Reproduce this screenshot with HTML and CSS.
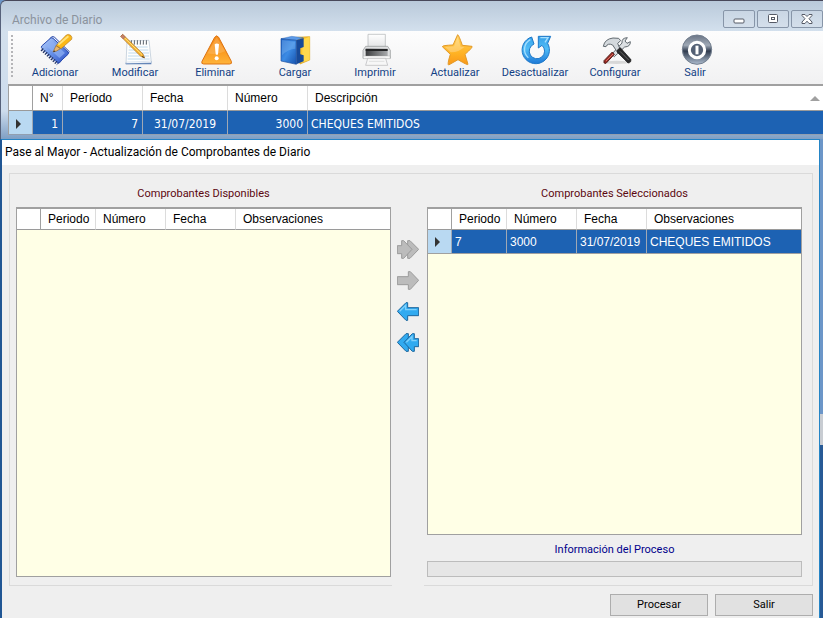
FILE: index.html
```html
<!DOCTYPE html>
<html lang="es">
<head>
<meta charset="utf-8">
<title>Archivo de Diario</title>
<link rel="stylesheet" href="styles.css">
</head>
<body>
<section class="window">
  <header class="titlebar">
    <h1 class="titlebar-text">Archivo de Diario</h1>
    <div class="window-buttons">
      <button class="window-button" aria-label="Minimizar"><svg width="12" height="12" viewBox="0 0 12 12"><rect x="1" y="6" width="10" height="4" rx="1" fill="#fff" stroke="#555a66"/></svg></button>
      <button class="window-button" aria-label="Restaurar"><svg width="12" height="12" viewBox="0 0 12 12"><rect x="1.5" y="1.5" width="9" height="8" rx="1" fill="#fff" stroke="#555a66"/><rect x="4.500" y="4.500" width="3" height="2" fill="#fff" stroke="#555a66"/></svg></button>
      <button class="window-button" aria-label="Cerrar"><svg width="12" height="12" viewBox="0 0 12 12"><path d="M1 1.500h3l2 2 2-2h3v1L8 5.700l3 3.300v1.500H8l-2-2.300-2 2.300H1V9l3-3.300-3-3.200z" fill="#fff" stroke="#555a66"/></svg></button>
    </div>
  </header>

  <div class="window-body">
    <nav class="toolbar">
      <span class="grip"></span>
      <button class="tool">
        <svg class="tool-icon" viewBox="0 0 96 96">
          <defs><linearGradient id="note" x1="0" y1="0" x2="1" y2="1"><stop offset="0" stop-color="#b9d2fa"/><stop offset=".5" stop-color="#6791e8"/><stop offset="1" stop-color="#2b4ec4"/></linearGradient></defs>
          <path d="M12 44 37 9q5-3 10 1L91 53 60 88z" fill="#e8effc" stroke="#2746a8" stroke-width="3"/>
          <path d="M8 36 34 13q4-3 8 0L87 54q3 3 0 7L60 86q-4 3-8-1L9 46q-3-5-1-10z" fill="url(#note)" stroke="#2b4bb0" stroke-width="3"/>
          <path d="M20 34 37 19 78 57 61 72z" fill="#8eb1f4" opacity=".7"/>
          <path d="M8 46 56 90" stroke="#20305f" stroke-width="10" stroke-dasharray="4 4"/>
          <path d="M6 43 54 87" stroke="#dfe8fb" stroke-width="3" stroke-dasharray="4 4"/>
          <path d="M51 35 82 3q6-4 13 1 6 7 3 12L66 44z" fill="#fbb817" stroke="#b87915" stroke-width="2"/>
          <path d="M58 32 88 7" stroke="#ffe27a" stroke-width="6"/>
          <path d="M51 35 64 44 53 51 42 54z" fill="#e9b76c" stroke="#8e6531" stroke-width="2"/><path d="M42 54l7-1-3-4z" fill="#333"/>
        </svg>
        <span>Adicionar</span>
      </button>
      <button class="tool">
        <svg class="tool-icon" viewBox="0 0 96 96">
          <path d="M24 21 90 19 97 86 21 90z" fill="#fdfefe" stroke="#b4c3d1" stroke-width="2"/>
          <path d="M20 86 97 82v9H20z" fill="#5c7fb4"/>
          <path d="M23 84 96 81 97 86 21 88z" fill="#fff" stroke="#a9bfd7" stroke-width="1"/>
          <path d="M30 39h56M29 48h59M28 57h62M27 66h63M26 75h66" stroke="#a5c9e5" stroke-width="2"/>
          <path d="M37 30V20m9 10V20m9 10V20m9 10V20m9 10V20m9 10V20" stroke="#70777f" stroke-width="4" stroke-linecap="round"/>
          <path d="M34 30V19m9 10V19m9 10V19m9 10V19m9 10V19m9 10V19" stroke="#fff" stroke-width="2"/>
          <path d="M5 7 11 1 72 60 77 72 65 67z" fill="#f6b22b" stroke="#a76e28" stroke-width="2"/>
          <path d="M13 8 69 62" stroke="#ffe183" stroke-width="3"/>
          <path d="M5 7 11 1 19 9 13 15z" fill="#c5806a" stroke="#86503d" stroke-width="1"/><path d="M71 66 77 72 69 69z" fill="#222"/>
        </svg>
        <span>Modificar</span>
      </button>
      <button class="tool">
        <svg class="tool-icon" viewBox="0 0 96 96">
          <defs><linearGradient id="warn" x1="0" y1="0" x2="0" y2="1"><stop offset="0" stop-color="#f58a16"/><stop offset=".55" stop-color="#fa9a20"/><stop offset="1" stop-color="#ffb43a"/></linearGradient></defs>
          <path d="M47 10q6-9 12 0L97 82q3 8-5 8H14q-8 0-5-8z" fill="url(#warn)" stroke="#dd7415" stroke-width="3"/>
          <path d="M53 10 25 58Q53 64 79 52z" fill="#fff" opacity=".16"/>
          <path d="M47 31q6-5 13 0L57 61q-3 3-7 0z" fill="#fff"/><circle cx="53" cy="73" r="6" fill="#fff"/>
        </svg>
        <span>Eliminar</span>
      </button>
      <button class="tool">
        <svg class="tool-icon" viewBox="0 0 96 96">
          <defs><linearGradient id="box" x1="0" y1="0" x2="1" y2="1"><stop offset="0" stop-color="#1e62c4"/><stop offset=".5" stop-color="#3c8be4"/><stop offset="1" stop-color="#1752ad"/></linearGradient></defs>
          <path d="M52 10 92 8V78L63 90z" fill="#ffc62b" stroke="#d89b13" stroke-width="2"/>
          <path d="M70 17 92 8V78L70 85z" fill="#ffd84e"/>
          <path d="M6 14 38 7 73 11 52 19z" fill="#5b9ae8" stroke="#2459a5" stroke-width="1"/>
          <path d="M6 14 52 19V91L6 81z" fill="url(#box)" stroke="#1c4e9d" stroke-width="2"/>
          <path d="M52 19 74 12V39L64 43V61L74 64V82L52 91z" fill="#174a99"/>
          <path d="M9 18 49 23V44Q28 44 9 64z" fill="#90c2f6" opacity=".35"/>
        </svg>
        <span>Cargar</span>
      </button>
      <button class="tool">
        <svg class="tool-icon" viewBox="0 0 96 96">
          <defs><linearGradient id="prn" x1="0" y1="0" x2="1" y2="0"><stop offset="0" stop-color="#3c3d3f"/><stop offset="1" stop-color="#a9abad"/></linearGradient><linearGradient id="paper" x1="0" y1="0" x2="0" y2="1"><stop offset="0" stop-color="#fff"/><stop offset="1" stop-color="#e1e2e3"/></linearGradient></defs>
          <path d="M27 1h52v42H27z" fill="url(#paper)" stroke="#aeb0b2" stroke-width="2"/>
          <path d="M20 37h66l8 12v24H12V49z" fill="#dfe0e1" stroke="#8d8f91" stroke-width="2"/>
          <path d="M20 44h66v24H20z" fill="url(#prn)"/><path d="M20 48h66" stroke="#232426" stroke-width="6"/>
          <path d="M13 66h80v8H13z" fill="#f7f7f7" stroke="#a5a6a8" stroke-width="1"/>
          <path d="M26 73h54l6 21H20z" fill="#f7f7f7" stroke="#b3b4b6" stroke-width="2"/><path d="M30 82h46" stroke="#d3d4d5" stroke-width="2"/>
        </svg>
        <span>Imprimir</span>
      </button>
      <button class="tool">
        <svg class="tool-icon" viewBox="0 0 96 96">
          <defs><linearGradient id="star" x1="0" y1="0" x2="0" y2="1"><stop offset="0" stop-color="#ffd261"/><stop offset=".6" stop-color="#ffb324"/><stop offset="1" stop-color="#f99719"/></linearGradient></defs>
          <path d="M56 2Q59 2 70 34L99 37Q103 39 78 61L87 91Q87 95 57 77L29 93Q24 93 34 61L10 38Q10 34 42 33Z" fill="url(#star)" stroke="#e39a28" stroke-width="3" stroke-linejoin="round"/>
          <path d="M56 9 45 37 18 39 35 55Q58 56 76 39L65 38z" fill="#fff" opacity=".25"/>
        </svg>
        <span>Actualizar</span>
      </button>
      <button class="tool">
        <svg class="tool-icon" viewBox="0 0 96 96">
          <defs><linearGradient id="undo" x1="0" y1="0" x2="0" y2="1"><stop offset="0" stop-color="#359fe8"/><stop offset=".45" stop-color="#50bdf7"/><stop offset="1" stop-color="#1d78d6"/></linearGradient></defs>
          <path d="M38 9A41 41 0 1 0 86 28L95 7H58V42L69 34A23 23 0 1 1 45 30Z" fill="url(#undo)" stroke="#1e78c8" stroke-width="3" stroke-linejoin="round"/>
          <path d="M34 17A33 33 0 0 0 28 71M64 11H87L78 25" fill="none" stroke="#a4defe" stroke-width="4"/>
        </svg>
        <span>Desactualizar</span>
      </button>
      <button class="tool">
        <svg class="tool-icon" viewBox="0 0 96 96">
          <ellipse cx="53" cy="85" rx="41" ry="5" fill="#d8d8d8"/>
          <path d="M69 27Q67 12 85 11L78 21 84 28 94 23Q95 38 77 39L46 68 38 61z" fill="#dce0e3" stroke="#626a70" stroke-width="3"/>
          <path d="M46 61 21 88Q13 90 15 80L40 54z" fill="#9e2b24" stroke="#53211d" stroke-width="3"/><path d="M21 81 42 60" stroke="#d57065" stroke-width="3"/>
          <path d="M13 37Q17 15 42 12L59 13 65 20 56 28 63 45 54 53 41 33Q26 26 21 38z" fill="#d4d9dd" stroke="#626a70" stroke-width="3"/>
          <path d="M56 47 64 41 95 76Q98 86 87 87L54 54z" fill="#29292b" stroke="#111" stroke-width="2"/><path d="M63 52 89 78" stroke="#666" stroke-width="3"/>
        </svg>
        <span>Configurar</span>
      </button>
      <button class="tool">
        <svg class="tool-icon" viewBox="0 0 96 96">
          <defs><linearGradient id="power" x1="0" y1="0" x2="0" y2="1"><stop offset="0" stop-color="#6b7585"/><stop offset=".35" stop-color="#9fa9b6"/><stop offset=".55" stop-color="#303c4f"/><stop offset="1" stop-color="#afbed0"/></linearGradient></defs>
          <circle cx="54" cy="47" r="44" fill="url(#power)" stroke="#727e8e" stroke-width="3"/>
          <circle cx="54" cy="48" r="23" fill="#536074" stroke="#fff" stroke-width="9"/><path d="M54 35v26" stroke="#fff" stroke-width="9"/>
        </svg>
        <span>Salir</span>
      </button>
    </nav>

    <table class="grid journal">
      <colgroup><col class="c-mark"><col class="c-no"><col class="c-period"><col class="c-date"><col class="c-number"><col></colgroup>
      <thead><tr><th class="mark"></th><th>N°</th><th>Período</th><th>Fecha</th><th>Número</th><th><span class="sort-head">Descripción<i class="sort-mark"></i></span></th></tr></thead>
      <tbody><tr><td class="mark"><i class="row-mark"></i></td><td class="num">1</td><td class="num">7</td><td class="center">31/07/2019</td><td class="num">3000</td><td>CHEQUES EMITIDOS</td></tr></tbody>
    </table>
  </div>
</section>

<main class="dialog">
  <h2 class="dialog-title">Pase al Mayor - Actualización de Comprobantes de Diario</h2>
  <div class="dialog-body">
    <div class="group">
      <section class="panel">
        <h3 class="caption">Comprobantes Disponibles</h3>
        <div class="list">
          <table class="grid">
            <colgroup><col class="c-mark"><col class="c-short"><col class="c-mid"><col class="c-mid"><col></colgroup>
            <thead><tr><th class="mark"></th><th>Periodo</th><th>Número</th><th>Fecha</th><th>Observaciones</th></tr></thead>
          </table>
        </div>
      </section>

      <div class="arrows">
        <button class="arrow" aria-label="Seleccionar todos" disabled><svg viewBox="0 0 66 57"><path class="gray" d="M21 17H32V2H39L65 28 39 55H32V41H21z"/><path class="gray" d="M1 17H14V2H20L45 28 20 55H14V41H1z"/></svg></button>
        <button class="arrow" aria-label="Seleccionar" disabled><svg viewBox="0 0 66 57"><path class="gray" d="M1 17H34V2H40L65 28 40 55H34V41H1z"/></svg></button>
        <button class="arrow" aria-label="Quitar"><svg viewBox="0 0 66 57"><path class="blue" d="M65 17H32V2H27L1 28 27 55H32V41H65z"/><path class="shine" d="M8 28 26 10V23H59"/></svg></button>
        <button class="arrow" aria-label="Quitar todos"><svg viewBox="0 0 66 57"><path class="blue" d="M45 17H34V2H27L1 28 27 55H34V41H45z"/><path class="blue" d="M65 17H52V2H46L21 28 46 55H52V41H65z"/><path class="shine" d="M28 28 45 11V23H59"/></svg></button>
      </div>

      <section class="panel">
        <h3 class="caption">Comprobantes Seleccionados</h3>
        <div class="list">
          <table class="grid">
            <colgroup><col class="c-mark"><col class="c-short"><col class="c-mid"><col class="c-mid"><col></colgroup>
            <thead><tr><th class="mark"></th><th>Periodo</th><th>Número</th><th>Fecha</th><th>Observaciones</th></tr></thead>
            <tbody><tr><td class="mark"><i class="row-mark"></i></td><td>7</td><td>3000</td><td>31/07/2019</td><td>CHEQUES EMITIDOS</td></tr></tbody>
          </table>
        </div>
        <label class="process-label" for="process">Información del Proceso</label>
        <progress class="process" id="process" value="0" max="100"></progress>
      </section>
    </div>
    <footer class="actions">
      <button class="action">Procesar</button>
      <button class="action">Salir</button>
    </footer>
  </div>
</main>
</body>
</html>
```
FILE: styles.css
```css
* { box-sizing: border-box; }

body {
  margin: 0;
  min-height: 100vh;
  display: flex;
  flex-direction: column;
  overflow-x: hidden;
  font: 11px/14px Roboto, sans-serif;
  color: #000;
  background: linear-gradient(#6c96c8 0 67%, #c8ccd2 67% 72%, #285a96 72%);
}

h1, h2, h3 { margin: 0; font-weight: normal; }
button { font: inherit; padding: 0; }

.window {
  border-top: 1px solid #48485a;
  border-left: 1px solid #56617a;
  border-radius: 6px 0 0 0;
  background: linear-gradient(#b9c9da, #d3e0ed 30px, #cddced 110px, #7f9fc4);
}

.titlebar {
  display: flex;
  justify-content: space-between;
  align-items: center;
  height: 30px;
  padding: 5px 0 0 11px;
}
.titlebar-text { padding-top: 2px; font: 12px/16px Roboto, sans-serif; color: #8b939d; }
.window-buttons { display: flex; gap: 2px; }
.window-button {
  display: grid;
  place-items: center;
  width: 32px;
  height: 18px;
  border: 1px solid #8795a8;
  border-radius: 2px;
  background: linear-gradient(#c9d6e4, #d4dfeb);
}

.window-body { padding: 0 0 4px 7px; }

.toolbar {
  display: flex;
  height: 53px;
  background: linear-gradient(#fdfdfd, #f1f1f2);
}
.grip {
  width: 2px;
  height: 42px;
  margin: 4px 2px 0 3px;
  background: repeating-linear-gradient(#b5b5b8 0 2px, transparent 2px 4px);
}
.tool {
  width: 80px;
  display: flex;
  flex-direction: column;
  align-items: center;
  padding-top: 3px;
  border: 0;
  background: none;
  color: #123f84;
}
.tool-icon { width: 32px; height: 32px; overflow: visible; }

.grid {
  width: 100%;
  table-layout: fixed;
  border-collapse: separate;
  border-spacing: 0;
  font: 12px/16px "Liberation Sans", sans-serif;
}
.grid th, .grid td {
  overflow: hidden;
  padding: 0;
  text-align: left;
  font-weight: normal;
  white-space: nowrap;
  border-right: 1px solid #dcdcdc;
}
.grid th {
  height: 21px;
  padding-left: 7px;
  background: #fff;
  border-bottom: 1px solid #9a9a9a;
}
.grid td {
  height: 24px;
  padding-left: 3px;
  color: #fff;
  background: #1d62b3;
  border-right-color: #a0a8b4;
  border-bottom: 1px solid #a0a0a0;
}
.grid th:last-child, .grid td:last-child { border-right: 0; }
.grid th.mark { border-right-color: #a0a0a0; }
.grid td.mark { padding-left: 7px; background: #b9d9f2; }
.row-mark {
  display: block;
  width: 0;
  border: 5px solid transparent;
  border-left-color: #333;
  border-right: 0;
}

.c-mark { width: 24px; }
.c-short { width: 55px; }
.c-mid { width: 70px; }
.c-no { width: 30px; }
.c-period, .c-number { width: 80px; }
.c-date { width: 85px; }

.journal {
  border-top: 2px solid #a0a0a0;
  border-left: 1px solid #a0a0a0;
}
.journal th { height: 25px; }
.journal td {
  height: 24px;
  padding-top: 3px;
  border-bottom: 1px solid #929fb0;
  font: 12px/16px "DejaVu Sans Condensed", "DejaVu Sans", sans-serif;
}
.journal td.num { padding-right: 4px; text-align: right; }
.journal td.center { padding-left: 0; text-align: center; }
.sort-head { display: flex; justify-content: space-between; align-items: center; padding-right: 3px; }
.sort-mark { border: 5px solid transparent; border-bottom-color: #a0a0a0; border-top: 0; }

.dialog {
  flex: 1;
  display: flex;
  flex-direction: column;
  margin-right: 3px;
  border: solid #2585c6;
  border-width: 1px 1px 0 0;
  border-left: 2px solid #205694;
  background: #efefef;
}
.dialog-title {
  padding: 4px 3px 5px;
  background: #fff;
  font: 12px/16px Roboto, sans-serif;
}
.dialog-body {
  flex: 1;
  display: flex;
  flex-direction: column;
  padding: 8px 6px 2px 7px;
}
.group {
  flex: 1;
  display: flex;
  padding: 0 10px 0 6px;
  border: 1px solid #dadada;
}
.panel {
  flex: 1;
  min-width: 0;
  display: flex;
  flex-direction: column;
  padding: 13px 0 8px;
}
.caption {
  margin-bottom: 6px;
  font: inherit;
  text-align: center;
  color: #5c0810;
}
.list {
  flex: 1;
  border: 1px solid #a0a0a0;
  border-top-width: 2px;
  background: #ffffe6;
}
.arrows {
  display: flex;
  flex-direction: column;
  align-items: center;
  gap: 12px;
  width: 32px;
  margin: 0 3px -1px 1px;
  padding-top: 66px;
  background: #efefef;
}
.arrow {
  width: 22px;
  height: 19px;
  border: 0;
  background: none;
}
.arrow svg { display: block; width: 22px; height: 19px; }
.gray { fill: #bcbcbc; stroke: #9b9b9b; stroke-width: 3; }
.blue { fill: #31aaf0; stroke: #1d679e; stroke-width: 3; }
.shine { fill: none; stroke: #7fd0fb; stroke-width: 4; }

.process-label { margin: 8px 0 4px; text-align: center; color: #00008b; }
.process {
  appearance: none;
  display: block;
  width: 100%;
  height: 16px;
  border: 1px solid #bcbcbc;
  background: #e6e6e6;
}
.process::-webkit-progress-bar { background: #e6e6e6; }
.process::-webkit-progress-value { background: #06b025; }

.actions {
  display: flex;
  justify-content: flex-end;
  gap: 7px;
  padding-top: 8px;
}
.action {
  width: 98px;
  height: 22px;
  border: 1px solid #adadad;
  background: #e1e1e1;
  color: #000;
}
```
